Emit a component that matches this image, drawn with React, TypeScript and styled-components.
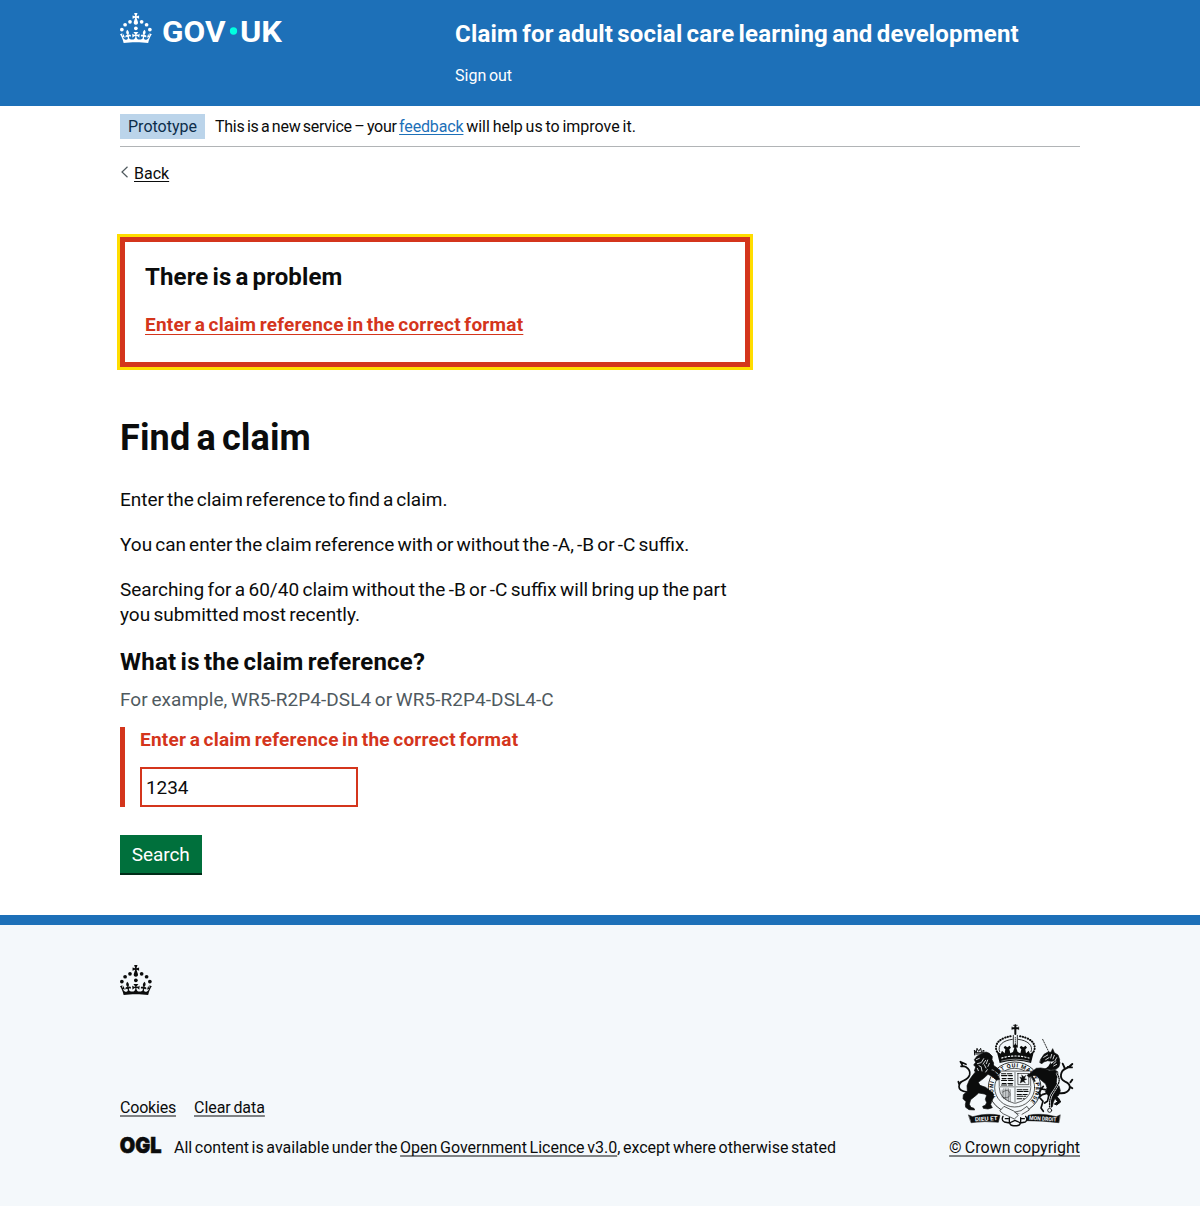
import React from "react";
import styled, { createGlobalStyle } from "styled-components";

const ink = "#0b0c0c";
const blue = "#1d70b8";
const red = "#d4351c";
const pale = "#f4f8fb";

const GlobalStyle = createGlobalStyle`
  *, *::before, *::after { box-sizing: border-box; }
  body {
    margin: 0;
    background: #fff;
    color: ${ink};
    font-family: Roboto, "Liberation Sans", Arial, sans-serif;
    font-size: 19px;
    line-height: 25px;
  }
  h1, h2, p, ul { margin: 0; padding: 0; }
`;

const Container = styled.div`
  width: 960px;
  margin: 0 auto;
`;

const Header = styled.header`
  height: 106px;
  background: ${blue};
  color: #fff;
`;

const HeaderRow = styled(Container)`
  display: grid;
  grid-template-columns: 335px 1fr;
  padding-top: 13px;
`;

const ServiceName = styled.div`
  padding-top: 6px;
  font-size: 24px;
  font-weight: 700;
  line-height: 30px;
  letter-spacing: 0.2px;
  word-spacing: -2px;
  white-space: nowrap;
`;

const HeaderNav = styled.nav`
  margin-top: 16px;
  line-height: 20px;
`;

const Small = styled.span<{ $track?: number; $word?: number }>`
  display: block;
  margin-bottom: -1px;
  padding-top: 1px;
  font-size: 16px;
  line-height: 20px;
  letter-spacing: ${(p) => p.$track ?? 0}px;
  word-spacing: ${(p) => p.$word ?? 0}px;
  white-space: nowrap;
`;

const Run = styled.span<{ $track?: number; $word?: number }>`
  letter-spacing: ${(p) => p.$track ?? 0}px;
  word-spacing: ${(p) => p.$word ?? 0}px;
`;

const Link = styled.a<{ $color?: string; $offset?: number }>`
  color: ${(p) => p.$color ?? ink};
  text-decoration: underline;
  text-decoration-thickness: 1px;
  text-decoration-skip-ink: none;
  text-underline-offset: ${(p) => p.$offset ?? 2}px;
`;

const FooterLink = styled(Link)`
  text-decoration-color: #7f8284;
  text-decoration-thickness: 2px;
`;

const PhaseBanner = styled(Container)`
  display: flex;
  align-items: center;
  height: 41px;
  border-bottom: 1px solid #b1b4b6;
`;

const Tag = styled.strong`
  display: flex;
  align-items: center;
  justify-content: center;
  width: 85px;
  height: 25px;
  margin-right: 10px;
  background: #bbd4ea;
  color: #0c2d4a;
  font-weight: 400;
`;

const BackLink = styled.div`
  display: flex;
  align-items: center;
  gap: 5px;
  height: 20px;
  margin-top: 16px;
`;

const BackChevron = styled.svg`
  display: block;
  margin-top: -2px;
`;

const Main = styled.main`
  width: 630px;
  padding-top: 54px;
`;

const ErrorSummary = styled.section`
  padding: 20px 20px 25px;
  height: 130px;
  margin-bottom: 50px;
  border: 5px solid ${red};
  outline: 3px solid #fd0;
`;

const HeadingM = styled.h2`
  margin-bottom: 20px;
  font-size: 24px;
  line-height: 30px;
  letter-spacing: 0.12px;
  word-spacing: -2px;
`;

const HeadingL = styled.h1`
  margin-bottom: 29px;
  padding-top: 1px;
  font-size: 36px;
  line-height: 40px;
  letter-spacing: 0.15px;
  word-spacing: -3px;
`;

const ErrorText = styled.p`
  color: ${red};
  font-weight: 700;
  letter-spacing: 0.24px;
  word-spacing: -1.5px;
`;

const Paragraph = styled.p<{ $word: number }>`
  margin-bottom: 20px;
  word-spacing: ${(p) => p.$word}px;
  white-space: nowrap;
`;

const Label = styled.label`
  display: block;
  margin-bottom: 10px;
  font-size: 24px;
  font-weight: 700;
  line-height: 30px;
  letter-spacing: 0.24px;
  word-spacing: -2px;
`;

const Hint = styled.div`
  margin-bottom: 15px;
  color: #505a5f;
  letter-spacing: 0.05px;
  word-spacing: -1.1px;
`;

const FormGroup = styled.div`
  display: flex;
  flex-direction: column;
  gap: 15px;
  margin-bottom: 28px;
  padding-left: 15px;
  border-left: 5px solid ${red};
`;

const Input = styled.input`
  width: 218.4px;
  height: 40px;
  padding: 5px 4px;
  border: 2px solid ${red};
  border-radius: 0;
  color: ${ink};
  font: inherit;
  letter-spacing: -0.1px;
`;

const Button = styled.button`
  display: block;
  width: 81.5px;
  height: 38px;
  padding: 0;
  border: 0;
  background: #00703c;
  box-shadow: 0 2px 0 #002d18;
  color: #fff;
  font: inherit;
  letter-spacing: -0.1px;
`;

const Footer = styled.footer`
  height: 291px;
  margin-top: 42px;
  padding-top: 40px;
  border-top: 10px solid ${blue};
  background: ${pale};
`;

const FooterRow = styled.div`
  display: flex;
  justify-content: space-between;
  align-items: flex-end;
  margin-top: 29px;
`;

const FooterLinks = styled.div`
  display: flex;
  gap: 18px;
  margin-bottom: 20px;
`;

const Licence = styled.div`
  display: flex;
  align-items: center;
  gap: 13px;
`;

const Copyright = styled.div`
  display: flex;
  flex-direction: column;
  align-items: center;
  gap: 10px;
`;

const Block = styled.svg`
  display: block;
  flex: none;
  overflow: visible;
`;

const OglMark = styled(Block)`
  margin-top: -3px;
`;

const dots = [
  [20, 17.6], [10.2, 23.5], [3.7, 33.2], [31.7, 30.6], [43.3, 17.6], [53.2, 23.5], [59.7, 33.2],
];

function CrownShape() {
  return (
    <g>
      {dots.map(([x, y]) => <circle key={x} cx={x} cy={y} r="3.7" />)}
      <path d="M33.1,9.8c.2-.1.3-.3.5-.5l4.6,2.4v-6.8l-4.6,1.5c-.1-.2-.3-.3-.5-.5l1.9-5.9h-6.7l1.9,5.9c-.2.1-.3.3-.5.5l-4.6-1.5v6.8l4.6-2.4c.1.2.3.3.5.5l-2.6,8c-.9,2.8,1.2,5.7,4.1,5.7h0c3,0,5.1-2.9,4.1-5.7l-2.6-8ZM37,37.9s-3.4,3.8-4.1,6.1c2.2,0,4.2-.5,6.4-2.8l-.7,8.5c-2-2.8-4.4-4.1-5.7-3.8.1,3.1.5,6.7,5.8,7.2,3.7.3,6.7-1.5,7-3.8.4-2.6-2-4.3-3.7-1.6-1.4-4.5,2.4-6.1,4.9-3.2-1.9-4.5-1.8-7.7,2.4-10.9,3,4,2.6,7.3-1.2,11.1,2.4-1.3,6.2,0,4,4.6-1.2-2.8-3.7-2.2-4.2.2-.3,1.7.7,3.7,3,4.2,1.9.3,4.7-.9,7-5.9-1.3,0-2.4.7-3.9,1.7l2.4-8c.6,2.3,1.4,3.7,2.2,4.5.6-1.6.5-2.8,0-5.3l5,1.8c-2.6,3.6-5.2,8.7-7.3,17.5-7.4-1.1-15.7-1.7-24.5-1.7h0c-8.8,0-17.1.6-24.5,1.7-2.1-8.9-4.7-13.9-7.3-17.5l5-1.8c-.5,2.5-.6,3.7,0,5.3.8-.8,1.6-2.3,2.2-4.5l2.4,8c-1.5-1-2.6-1.7-3.9-1.7,2.3,5,5.2,6.2,7,5.9,2.3-.4,3.3-2.4,3-4.2-.5-2.4-3-3.1-4.2-.2-2.2-4.6,1.6-6,4-4.6-3.7-3.7-4.2-7.1-1.2-11.1,4.2,3.2,4.3,6.4,2.4,10.9,2.5-2.8,6.3-1.3,4.9,3.2-1.8-2.7-4.1-1-3.7,1.6.3,2.3,3.3,4.1,7,3.8,5.4-.5,5.7-4.2,5.8-7.2-1.3-.2-3.7,1-5.7,3.8l-.7-8.5c2.2,2.3,4.2,2.7,6.4,2.8-.7-2.3-4.1-6.1-4.1-6.1h10.6,0Z" />
    </g>
  );
}

function GovukLogo() {
  return (
    <Block width="162" height="30" viewBox="0 0 324 60" fill="#fff">
      <CrownShape />
      <g fontFamily="Roboto, sans-serif" fontWeight="700" fontSize="60">
        <text x="84" y="57" textLength="127" lengthAdjust="spacingAndGlyphs">GOV</text>
        <text x="240" y="57" textLength="84" lengthAdjust="spacingAndGlyphs">UK</text>
      </g>
      <circle cx="227" cy="36" r="7.3" fill="#00ffe0" />
    </Block>
  );
}

function OglLogo() {
  return (
    <OglMark width="41" height="17" viewBox="0 0 41 17" fill={ink}>
      <text x="-0.2" y="16.2" fontFamily="Inter, sans-serif" fontWeight="900" fontSize="22" textLength="41.8" lengthAdjust="spacingAndGlyphs" stroke={ink} strokeWidth="0.6">OGL</text>
    </OglMark>
  );
}

/** Royal coat of arms: crown, garter and shield between the lion and the unicorn. */
function Crest() {
  return (
    <Block width="125" height="103" viewBox="37 41 375 309" fill="none" stroke={ink} strokeLinecap="round" strokeLinejoin="round">
      {/* crown */}
      <path d="M227 45v26M219 54h16" strokeWidth="6" />
      <path d="M221 45h12M217 50v8M237 50v8" strokeWidth="2" />
      <path d="M172 124C160 100 184 80 220 77M282 124C294 100 270 80 234 77" strokeWidth="6" strokeDasharray="1 7" />
      <path d="M180 124C172 106 190 90 218 87M274 124C282 106 264 90 236 87" strokeWidth="2.500" />
      <path d="M221 75v36M233 75v36" strokeWidth="2.500" />
      <path d="M227 82v28" strokeWidth="3" strokeDasharray="1 5" />
      <path fill={ink} stroke="none" d="M171 122l12 8 4-9 8 8 2-12-5-5 4-6 7 5 7-5 4 6-5 5 3 12 8-4 4-12-4-6 7-7 7 7-4 6 4 12 8 4 3-12-5-5 4-6 7 5 7-5 4 6-5 5 2 12 8-8 4 9 12-8-9 36q-47-15-94 0z" />
      <path d="M186 143q41-12 82 0" stroke={pale} strokeWidth="3.500" strokeDasharray="4 6" />
      <path d="M186 152q41-11 82 0" stroke={pale} strokeWidth="1.500" />
      {/* garter */}
      <ellipse cx="225" cy="232" rx="79" ry="77" strokeWidth="2.500" fill={pale} />
      <ellipse cx="225" cy="232" rx="60" ry="58" strokeWidth="2" />
      <path id="garter" d="M178 273.400A64 61 0 1 1 272 273.400" stroke="none" />
      <text fill={ink} stroke="none" fontFamily="Roboto, sans-serif" fontSize="17" fontWeight="700">
        <textPath href="#garter" startOffset="17" textLength="270" lengthAdjust="spacing">HONI SOIT QUI MAL Y PENSE</textPath>
      </text>
      {/* quartered shield */}
      <g transform="translate(9 23) scale(0.96 0.9)">
        <path d="M177 177h98v57q0 38-49 51q-49-13-49-51z" fill={pale} strokeWidth="2" />
        <path d="M226 178v106M178 229h97" strokeWidth="5" stroke="#a8acae" />
        <path d="M184 186h13m5 0h14M184 192h17m5 0h12M186 202h12m6 0h14M184 208h16m6 0h14M186 218h12m6 0h14M184 223h16m6 0h12" strokeWidth="3.500" />
        <path d="M235 185h34v37h-34z" strokeWidth="2" strokeDasharray="3 2" />
        <path d="M247 190l7 6 6-5-4 11 7 2-9 4 5 9-8-5-9 5 3-12-4-8 7 2z" strokeWidth="1" fill={ink} />
        <path d="M186 240v24m5-28v33m5-33v36m5-36v38m5-38v41m5-38v39M187 247q20-14 23 4t-20 14" strokeWidth="1.500" />
        <path d="M233 239h14m4 0h15M233 245h17m4 0h13M233 255h13m5 0h13M233 261h18m4 0h5M233 269h14m5 0h3" strokeWidth="3.500" />
      </g>
      {/* lion */}
      <path fill={ink} d="M112 138l-8 10 4 8-6 8 6 6-4 12 12 8 12-6 12 4 12-5 8-12 2-13-5-10 1-10-9-9-10-4-10 4z" strokeWidth="2" />
      <path fill={ink} d="M108 184l-9 11-10 14-7 17 1 17-12 10-1 12 9 9-2 9 1 8 10 7 17 1-2-5-9-3-5-9 4-14 15-12 9-8 17 3 7 4-4 12 4 10-4 8-8 3 2 6 14 2 13-4-5-9 3-10 6-12-2-13-12-9-10-8-17-6-5-9 16-12 13-12 15 7 10 11 10-3-8-15-10-10-16-5-4-6 12 3 14 9 9 8 6-5-9-12-11-8-8-7z" strokeWidth="2" />
      <path d="M110 148l9-4m-6 16l11-3m8-12l-6 10m12-5l-8 11m-12 5l8 5m8-8l5 10m5-24l-4 11m9-1l-4 9m-20 5l2 9m-14-8l3 7m27-3l-5 7" stroke={pale} strokeWidth="2.500" />
      <path d="M105 134l-1-15 6 7 2-12 5 9 6-9 2 10 8-4-2 15M107 127h22M108 131h20" strokeWidth="3" />
      <path d="M82 245q-24-4-24-16 0-12 13-18 16-7 19-18 3-14-11-23-8-4-15-2M70 168l-8-14 17 8M59 224l-3-10M62 216l12-6" strokeWidth="5" />
      {/* unicorn */}
      <path d="M309 87l18 37" strokeWidth="2.500" strokeDasharray="4 4" />
      <path fill={ink} d="M303 147l10-15 12-7 9 1 5-11 5 12 11 7 5 14-4 9-10-6-12 2-10-2-12 4-5 5-6-3z" strokeWidth="2" />
      <path fill={ink} d="M346 151l11-4 4 10-3 12-9 8-15 2-17-4M332 157l2 12-12 6" strokeWidth="2" />
      <path d="M312 141l12-7m-6 14l10-6m8-10l-3 11m11-8l-4 11m11-4l-5 9m3 3l-7 6m9 2l-9 5" stroke={pale} strokeWidth="2.500" />
      <path fill={ink} d="M281 181l9-7 13-1 13 2 14 6 15-2 9 5 2 11-5 10-1 12 8 10 4 14-5 14-11 9-5 12-3 13-7 4 1-16 2-13-10-10-7-10 5-12-4-11-14-12-12-12-15-2-9 6-6-6 10-6z" strokeWidth="2" />
      <path d="M285 188l-9 8 9 16M311 228l-14 19 5 7M301 235l16 3M328 247l-20 6-10 8M301 263l9 10-6 20 7 10M327 256l-3 16-9 6" strokeWidth="5" />
      <path d="M344 254l13 10 6 11-12 9-7-3 10-7-8-10" fill={ink} strokeWidth="3" />
      <path d="M352 190q12 17 2 34t-17 27q-9 14-7 42" stroke={pale} strokeWidth="7" />
      <path d="M352 190q12 17 2 34t-17 27q-9 14-7 42" strokeWidth="4" strokeDasharray="3 4" />
      <circle cx="330" cy="300" r="6" strokeWidth="2.500" />
      <path d="M356 248q27 4 34-14 3-14-15-21-13-6-11-20 2-13 14-18 10-4 20-14M375 173l-6-13M384 170l13 1M392 216l6-8M391 229l7 5" strokeWidth="5.500" />
      {/* motto scroll and compartment */}
      <path fill={ink} d="M87 314l12 5q45-12 82-4l-5 21q-40-5-81 1zM361 314l-11 5q-48-12-84-4l-7 16q52 0 98 6z" strokeWidth="1.500" />
      <g fill={pale} stroke="none" fontFamily="Roboto, sans-serif" fontSize="17" fontWeight="700">
        <text x="106" y="333" textLength="68" lengthAdjust="spacingAndGlyphs" transform="rotate(-3 106 333)">DIEU ET</text>
        <text x="268" y="328" textLength="82" lengthAdjust="spacingAndGlyphs" transform="rotate(4 268 328)">MON DROIT</text>
      </g>
      <path d="M181 301l12-13 29 14 14 13-12 11-32-15zM226 305l18-4 18-13 7 11-22 13" fill={pale} strokeWidth="2" />
      <path d="M190 318q-6 12 4 17l16 3q3 10 16 8 14 2 16-8l15-3q9-6 1-17M209 322v16l17-8 17 8v-16" strokeWidth="4" />
      <path d="M197 325h9m39 0h9" strokeWidth="4" />
    </Block>
  );
}

export default function App() {
  return (
    <>
      <GlobalStyle />
      <Header>
        <HeaderRow>
          <GovukLogo />
          <div>
            <ServiceName>Claim for adult social care learning and development</ServiceName>
            <HeaderNav><Small $word={-1.3}>Sign out</Small></HeaderNav>
          </div>
        </HeaderRow>
      </Header>
      <PhaseBanner>
        <Tag><Small>Prototype</Small></Tag>
        <Small>
          <Run $track={-0.28} $word={-1.2}>This is a new service – your </Run>
          <Link $color={blue}><Run $track={-0.15}>feedback</Run></Link>
          <Run $word={-1.2}> will help us to improve it.</Run>
        </Small>
      </PhaseBanner>
      <Container>
        <BackLink>
          <BackChevron width="9" height="12" viewBox="0 0 9 12" fill="none" stroke="#505a5f" strokeWidth="1.2">
            <path d="M7.500 0.800L2 6l5.500 5.200" />
          </BackChevron>
          <Small><Link>Back</Link></Small>
        </BackLink>
        <Main>
          <ErrorSummary>
            <HeadingM>There is a problem</HeadingM>
            <ErrorText><Link $color={red} $offset={3}>Enter a claim reference in the correct format</Link></ErrorText>
          </ErrorSummary>
          <HeadingL>Find a claim</HeadingL>
          <Paragraph $word={-1.75}>Enter the claim reference to find a claim.</Paragraph>
          <Paragraph $word={-1.6}>You can enter the claim reference with or without the -A, -B or -C suffix.</Paragraph>
          <Paragraph $word={-1.33}>
            Searching for a 60/40 claim without the -B or -C suffix will bring up the part
            <br />
            you submitted most recently.
          </Paragraph>
          <Label htmlFor="reference">What is the claim reference?</Label>
          <Hint>For example, WR5-R2P4-DSL4 or WR5-R2P4-DSL4-C</Hint>
          <FormGroup>
            <ErrorText>Enter a claim reference in the correct format</ErrorText>
            <Input id="reference" defaultValue="1234" />
          </FormGroup>
          <Button>Search</Button>
        </Main>
      </Container>
      <Footer>
        <Container>
          <Block width="32" height="30" viewBox="0 0 64 60" fill={ink}><CrownShape /></Block>
          <FooterRow>
            <div>
              <FooterLinks>
                <Small $track={-0.2}><FooterLink>Cookies</FooterLink></Small>
                <Small $track={-0.05} $word={-1.2}><FooterLink>Clear data</FooterLink></Small>
              </FooterLinks>
              <Licence>
                <OglLogo />
                <Small $word={-1.35}>
                  All content is available under the <FooterLink>Open Government Licence v3.0</FooterLink>, except where otherwise stated
                </Small>
              </Licence>
            </div>
            <Copyright>
              <Crest />
              <Small $word={-0.8}><FooterLink>© Crown copyright</FooterLink></Small>
            </Copyright>
          </FooterRow>
        </Container>
      </Footer>
    </>
  );
}
